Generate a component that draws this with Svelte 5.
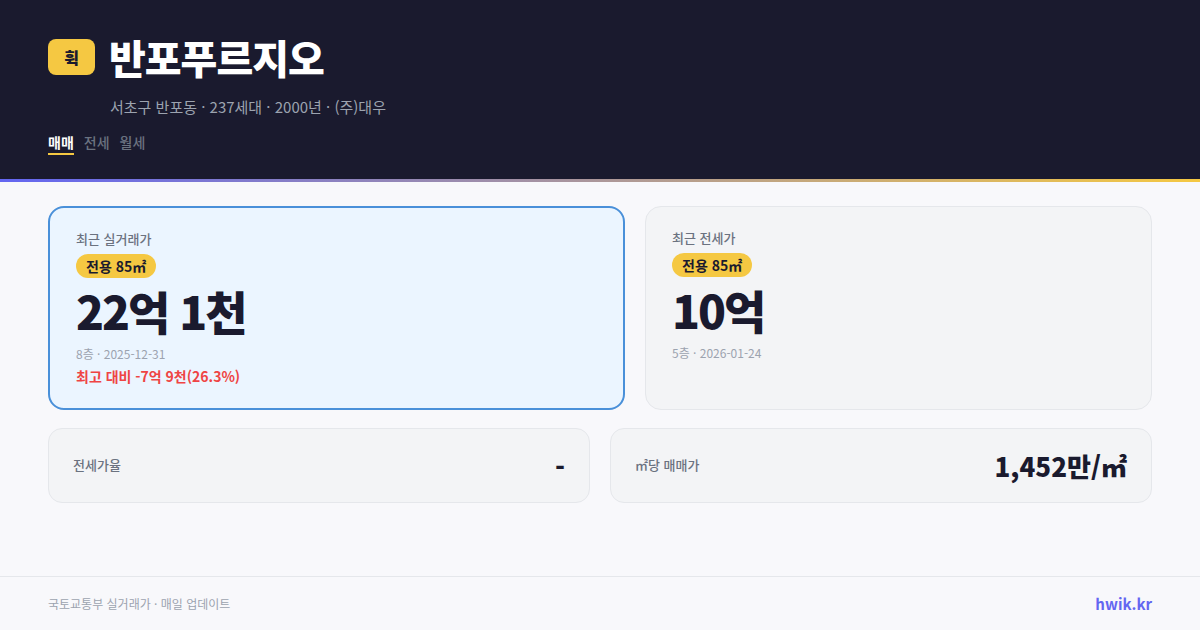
<script>
  const tabs = ['매매', '전세', '월세'];
</script>

<div class="page" lang="ko">
  <header class="hero">
    <div class="title-row">
      <span class="logo">휙</span>
      <h1>반포푸르지오</h1>
    </div>
    <p class="meta">서초구 반포동 · 237세대 · 2000년 · (주)대우</p>
    <nav class="tabs">
      {#each tabs as tab, i}
        <span class="tab" class:active={i === 0}>{tab}</span>
      {/each}
    </nav>
  </header>
  <div class="accent"></div>

  <main class="content">
    <div class="cards">
      <section class="card primary">
        <div class="card-label">최근 실거래가</div>
        <span class="pill">전용 85㎡</span>
        <div class="price">22억 1천</div>
        <div class="sub">8층 · 2025-12-31</div>
        <div class="drop">최고 대비 -7억 9천(26.3%)</div>
      </section>
      <section class="card">
        <div class="card-label">최근 전세가</div>
        <span class="pill">전용 85㎡</span>
        <div class="price">10억</div>
        <div class="sub">5층 · 2026-01-24</div>
      </section>
    </div>
    <div class="stats">
      <div class="stat">
        <span class="stat-label">전세가율</span>
        <span class="stat-value">-</span>
      </div>
      <div class="stat">
        <span class="stat-label">㎡당 매매가</span>
        <span class="stat-value">1,452만/㎡</span>
      </div>
    </div>
  </main>

  <footer class="footer">
    <span class="source">국토교통부 실거래가 · 매일 업데이트</span>
    <span class="brand">hwik.kr</span>
  </footer>
</div>

<style>
  :global(body) {
    margin: 0;
    background: #f8f8fb;
  }

  .page {
    width: 1200px;
    height: 630px;
    display: flex;
    flex-direction: column;
    overflow: hidden;
    font-family: "Noto Sans CJK KR", sans-serif;
    background: #f8f8fb;
  }

  .hero {
    height: 179px;
    box-sizing: border-box;
    padding: 27px 48px 0;
    background: #1a1a2e;
  }

  .title-row {
    display: flex;
    align-items: center;
    gap: 14px;
    height: 60px;
  }

  .logo {
    width: 47px;
    height: 36px;
    display: flex;
    align-items: center;
    justify-content: center;
    background: #f5c842;
    border-radius: 8px;
    color: #1a1a2e;
    font-size: 16px;
    font-weight: 900;
  }

  h1 {
    margin: 0;
    color: #fff;
    font-size: 40px;
    line-height: 60px;
    font-weight: 800;
    letter-spacing: -1px;
  }

  .meta {
    margin: 9px 0 0 62px;
    color: #9ca3af;
    font-size: 15px;
    line-height: 22px;
    font-weight: 400;
  }

  .tabs {
    display: flex;
    gap: 10px;
    margin-top: 14px;
  }

  .tab {
    color: #6b7280;
    font-size: 14px;
    line-height: 20px;
    font-weight: 500;
    padding-bottom: 1px;
  }

  .tab.active {
    color: #fff;
    font-weight: 700;
    border-bottom: 2px solid #f5c842;
  }

  .accent {
    height: 3px;
    background: linear-gradient(90deg, #6366f1, #f5c842);
  }

  .content {
    flex: 1;
    display: flex;
    flex-direction: column;
    gap: 18px;
    padding: 24px 48px 0;
  }

  .cards {
    display: grid;
    grid-template-columns: 577fr 507fr;
    gap: 20px;
    height: 204px;
  }

  .card {
    box-sizing: border-box;
    padding: 23px 26px 18px;
    display: flex;
    flex-direction: column;
    align-items: flex-start;
    background: #f3f4f6;
    border: 1px solid #e5e7eb;
    border-radius: 16px;
  }

  .card.primary {
    padding: 23px 26px 18px;
    background: #ebf5ff;
    border: 2px solid #4a90d9;
  }

  .card-label {
    color: #6b7280;
    font-size: 13px;
    line-height: 16px;
    font-weight: 500;
  }

  .pill {
    margin-top: 7px;
    padding: 0 10px;
    height: 24px;
    line-height: 24px;
    background: #f5c842;
    border-radius: 12px;
    color: #1a1a2e;
    font-size: 14px;
    font-weight: 700;
  }

  .price {
    margin-top: 5px;
    color: #1a1a2e;
    font-size: 46px;
    line-height: 54px;
    font-weight: 900;
    letter-spacing: -2px;
  }

  .sub {
    margin-top: 8px;
    color: #9ca3af;
    font-size: 12px;
    line-height: 18px;
  }

  .drop {
    margin-top: 3px;
    color: #ef4444;
    font-size: 14px;
    line-height: 20px;
    font-weight: 600;
  }

  .stats {
    display: grid;
    grid-template-columns: 1fr 1fr;
    gap: 20px;
  }

  .stat {
    box-sizing: border-box;
    height: 75px;
    padding: 0 24px;
    display: flex;
    align-items: center;
    justify-content: space-between;
    background: #f3f4f6;
    border: 1px solid #e5e7eb;
    border-radius: 14px;
  }

  .stat-label {
    padding-bottom: 2px;
    color: #6b7280;
    font-size: 13px;
    font-weight: 500;
  }

  .stat-value {
    color: #1a1a2e;
    font-size: 26px;
    font-weight: 800;
  }

  .footer {
    height: 54px;
    box-sizing: border-box;
    padding: 0 48px;
    display: flex;
    align-items: center;
    justify-content: space-between;
    border-top: 1px solid #e5e7eb;
  }

  .source {
    color: #9ca3af;
    font-size: 12px;
  }

  .brand {
    color: #6366f1;
    font-size: 15px;
    font-weight: 700;
  }
</style>
